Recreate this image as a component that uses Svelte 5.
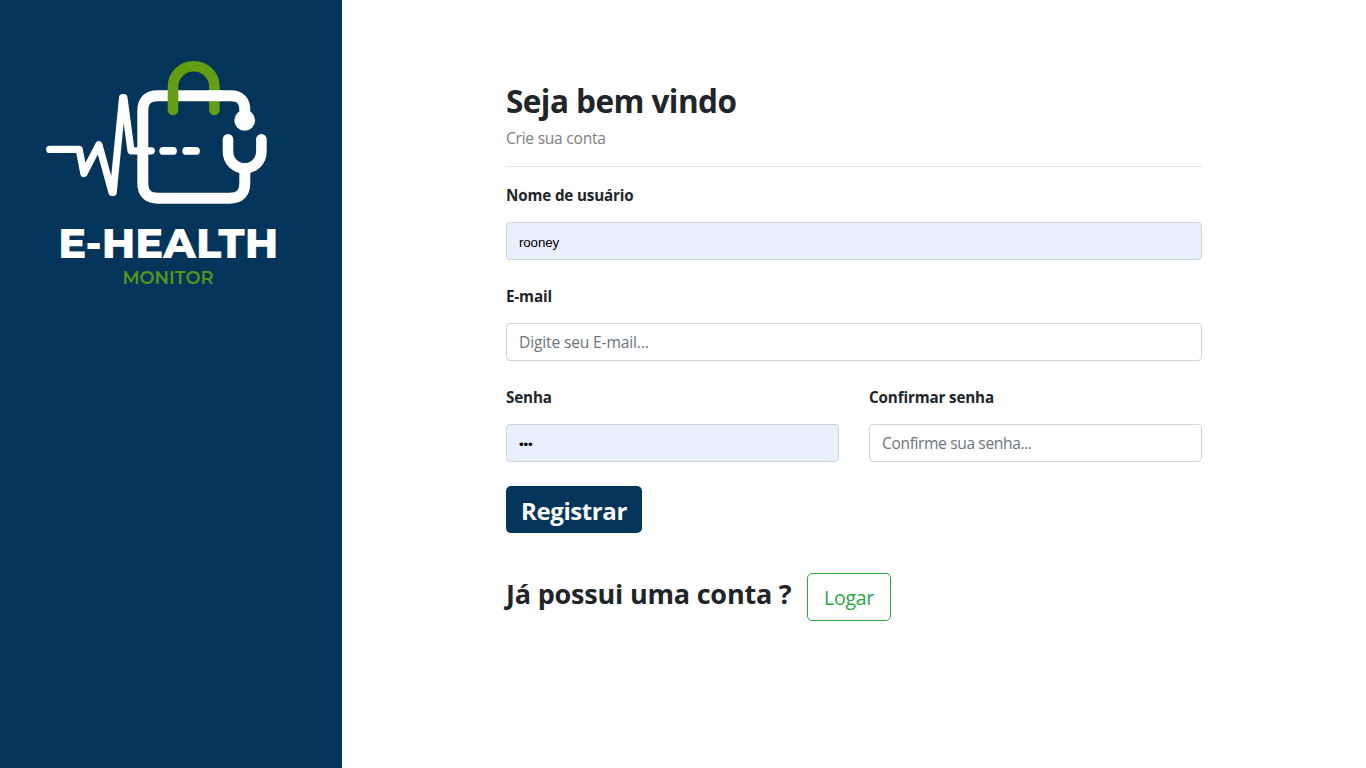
<script>
  let username = $state('rooney');
  let email = $state('');
  let password = $state('123');
  let confirmation = $state('');
</script>

<div class="page">
  <aside>
    <svg class="logo" viewBox="0 0 342 342" role="img" aria-label="E-Health Monitor">
      <g fill="none" stroke="#fff" stroke-linecap="round" stroke-linejoin="round">
        <path stroke-width="11" d="M244.8 118V110q0-14.3-14.3-14.3H158q-15.2 0-15.2 15V183q0 15.2 15.2 15.2H229.5q15.3 0 15.3-15.2V172" />
        <path stroke-width="10.6" d="M228 139.3V151.7A16.7 16.7 0 0 0 261.4 151.7V139.3" />
        <path stroke-width="7.2" d="M49.7 149.4H79.2L83.9 173.5L98.9 144.7L112 192.5H113.2L122.6 97.7H123.9L131 150.8H151.3" />
        <path stroke-width="7.8" d="M163.2 150.9H173M186.2 150.9H196" />
      </g>
      <circle cx="244.7" cy="120.4" r="10.4" fill="#fff" />
      <path fill="none" stroke="#639d12" stroke-width="10.6" stroke-linecap="round" d="M173 110V86.5A20.7 20.3 0 0 1 214.4 86.5V110" />
      <path fill="none" stroke="#fff" stroke-width="11" d="M208 95.7H222" />
      <text class="brand" x="58.3" y="257.8" textLength="220" lengthAdjust="spacingAndGlyphs">E-HEALTH</text>
      <text class="sub" x="122.5" y="283.5" textLength="91" lengthAdjust="spacingAndGlyphs">MONITOR</text>
    </svg>
  </aside>
  <main>
    <form onsubmit={(e) => e.preventDefault()}>
      <h1>Seja bem vindo</h1>
      <p>Crie sua conta</p>
      <hr />
      <div class="field">
        <label for="user">Nome de usuário</label>
        <input class="filled" id="user" bind:value={username} />
      </div>
      <div class="field">
        <label for="mail">E-mail</label>
        <input id="mail" placeholder="Digite seu E-mail..." bind:value={email} />
      </div>
      <div class="columns">
        <div class="field">
          <label for="pass">Senha</label>
          <input class="filled" id="pass" type="password" bind:value={password} />
        </div>
        <div class="field">
          <label for="confirm">Confirmar senha</label>
          <input class="tight" id="confirm" type="password" placeholder="Confirme sua senha..." bind:value={confirmation} />
        </div>
      </div>
      <button class="register">Registrar</button>
      <div class="login">
        <h2>Já possui uma conta ?</h2>
        <button type="button" class="enter">Logar</button>
      </div>
    </form>
  </main>
</div>

<style>
  :global(body) { margin: 0; background: #fff; }
  * { box-sizing: border-box; }
  .page {
    display: flex;
    height: 768px;
    overflow: hidden;
    font-family: "Segoe UI", "Open Sans", "Noto Sans", sans-serif;
    color: #212529;
  }
  aside { width: 342px; flex: none; background: #033459; }
  .logo { display: block; width: 342px; height: 342px; }
  .brand { font: 800 41.5px "Montserrat", Inter, sans-serif; fill: #fff; }
  .sub { font: 600 17.8px "Montserrat", Inter, sans-serif; fill: #55941b; }
  main { flex: 1; padding: 80px 164px 0; }
  form { width: 696px; }
  h1, h2, p { margin: 0; font-weight: 700; white-space: nowrap; }
  h1 { font-size: 31.5px; line-height: 42px; letter-spacing: -0.55px; }
  p { margin-top: 4px; font-weight: 400; font-size: 15.6px; line-height: 24px; letter-spacing: -0.26px; color: #808080; }
  hr { margin: 16px 0; border: 0; border-top: 1px solid #e5e5e5; }
  .field { display: flex; flex-direction: column; margin-bottom: 24px; }
  label { font-weight: 700; font-size: 15.2px; line-height: 24px; letter-spacing: -0.14px; margin-bottom: 15px; white-space: nowrap; }
  input {
    width: 100%;
    height: 38px;
    padding: 0 12px;
    border: 1px solid #ced4da;
    border-radius: 4px;
    background: #fff;
    color: #000;
    font: 400 15.6px "Segoe UI", "Open Sans", "Noto Sans", sans-serif;
    letter-spacing: -0.16px;
    outline: 0;
  }
  input.tight { letter-spacing: -0.38px; }
  input::placeholder { color: #6c757d; opacity: 1; }
  input.filled { background: #e8effd; font: 400 13.333px "Liberation Sans", Arial, sans-serif; letter-spacing: -0.12px; padding-top: 2px; }
  .columns { display: grid; grid-template-columns: 1fr 1fr; gap: 30px; }
  button { display: block; padding: 0; font-family: inherit; border-radius: 5px; cursor: pointer; }
  .register { width: 136px; height: 47px; padding-top: 2px; border: 0; background: #033459; color: #fff; font-size: 24px; font-weight: 700; letter-spacing: -0.4px; }
  .login { display: flex; gap: 16px; margin-top: 40px; }
  h2 { width: 285px; font-size: 27px; line-height: 42px; letter-spacing: -0.2px; }
  .enter { width: 84px; height: 48px; padding-top: 1px; border: 1px solid #28a745; background: #fff; color: #28a745; font-size: 19.5px; letter-spacing: -0.25px; }
</style>
